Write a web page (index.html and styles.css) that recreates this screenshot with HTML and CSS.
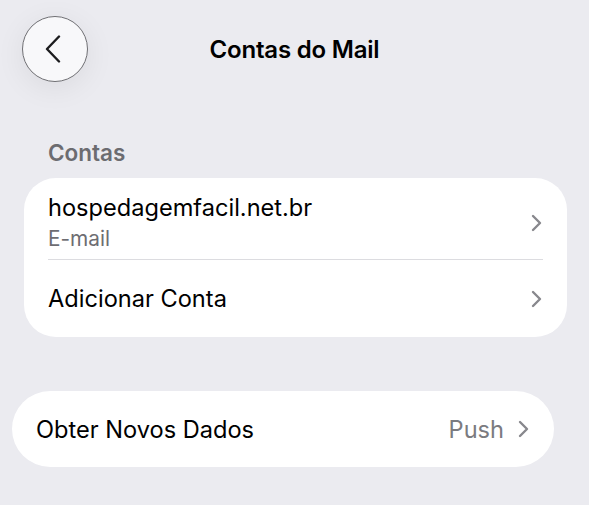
FILE: index.html
```html
<!DOCTYPE html>
<html lang="pt-BR">
<head>
  <meta charset="UTF-8">
  <title>Contas do Mail</title>
  <link rel="stylesheet" href="styles.css">
</head>
<body>
  <header class="topbar">
    <button class="back-btn" aria-label="Voltar">
      <svg width="16" height="28" viewBox="0 0 16 28">
        <path d="M14 1.5 L2 14 L14 26.5" fill="none" stroke="#1c1c1e" stroke-width="2.4" stroke-linecap="round" stroke-linejoin="round"/>
      </svg>
    </button>
    <h1 class="title">Contas do Mail</h1>
    <div></div>
  </header>

  <div class="section-label">Contas</div>

  <div class="card card-accounts">
    <div class="row row-two">
      <div class="row-text">
        <div class="row-title">hospedagemfacil.net.br</div>
        <div class="row-sub">E-mail</div>
      </div>
      <svg class="chev" width="11" height="18" viewBox="0 0 11 18">
        <path d="M2 2 L9 9 L2 16" fill="none" stroke="currentColor" stroke-width="2.4" stroke-linecap="round" stroke-linejoin="round"/>
      </svg>
    </div>
    <div class="divider"></div>
    <div class="row">
      <div class="row-title">Adicionar Conta</div>
      <svg class="chev" width="11" height="18" viewBox="0 0 11 18">
        <path d="M2 2 L9 9 L2 16" fill="none" stroke="currentColor" stroke-width="2.4" stroke-linecap="round" stroke-linejoin="round"/>
      </svg>
    </div>
  </div>

  <div class="card card-fetch">
    <div class="row">
      <div class="row-title">Obter Novos Dados</div>
      <div class="row-right">
        <span class="row-value">Push</span>
        <svg class="chev" width="11" height="18" viewBox="0 0 11 18">
          <path d="M2 2 L9 9 L2 16" fill="none" stroke="currentColor" stroke-width="2.4" stroke-linecap="round" stroke-linejoin="round"/>
        </svg>
      </div>
    </div>
  </div>
</body>
</html>
```

FILE: styles.css
```css
body {
  margin: 0;
  background: #ebebf0;
  font-family: Inter, "Noto Sans", sans-serif;
  color: #000;
}

.topbar {
  display: grid;
  grid-template-columns: 1fr auto 1fr;
  align-items: center;
  padding: 16px 22px 0;
}

.back-btn {
  width: 66px;
  height: 66px;
  border-radius: 50%;
  border: 1px solid #707074;
  background: #f8f8fa;
  box-shadow: 0 6px 30px rgba(0, 0, 0, 0.07);
  display: flex;
  align-items: center;
  justify-content: center;
  padding: 0 4px 0 0;
  cursor: pointer;
}

.title {
  margin: 0;
  font-size: 24px;
  font-weight: 600;
  letter-spacing: -0.2px;
}

.section-label {
  margin: 57px 0 11px;
  padding-left: 48px;
  font-size: 22.5px;
  line-height: 28px;
  font-weight: 600;
  color: #6c6c70;
}

.card {
  background: #fff;
  border-radius: 32px;
}

.card-accounts {
  margin: 0 22px 0 24px;
}

.card-fetch {
  margin: 54px 35px 0 12px;
  border-radius: 38px;
}

.row {
  display: flex;
  align-items: center;
  justify-content: space-between;
  height: 77px;
  padding: 0 25px 0 24px;
}

.row-two {
  height: auto;
  padding-top: 14px;
  padding-bottom: 5px;
}

.row-title {
  font-size: 23.6px;
  line-height: 31px;
}

.row-sub {
  font-size: 20.8px;
  line-height: 31px;
  color: #6d6d72;
}

.divider {
  height: 1px;
  margin: 0 24px;
  background: #dcdce0;
}

.card-fetch .row {
  height: 76px;
}

.row-right {
  display: flex;
  align-items: center;
  gap: 14px;
}

.row-value {
  font-size: 23.6px;
  color: #7b7b80;
}

.chev {
  color: #88888d;
}
```
